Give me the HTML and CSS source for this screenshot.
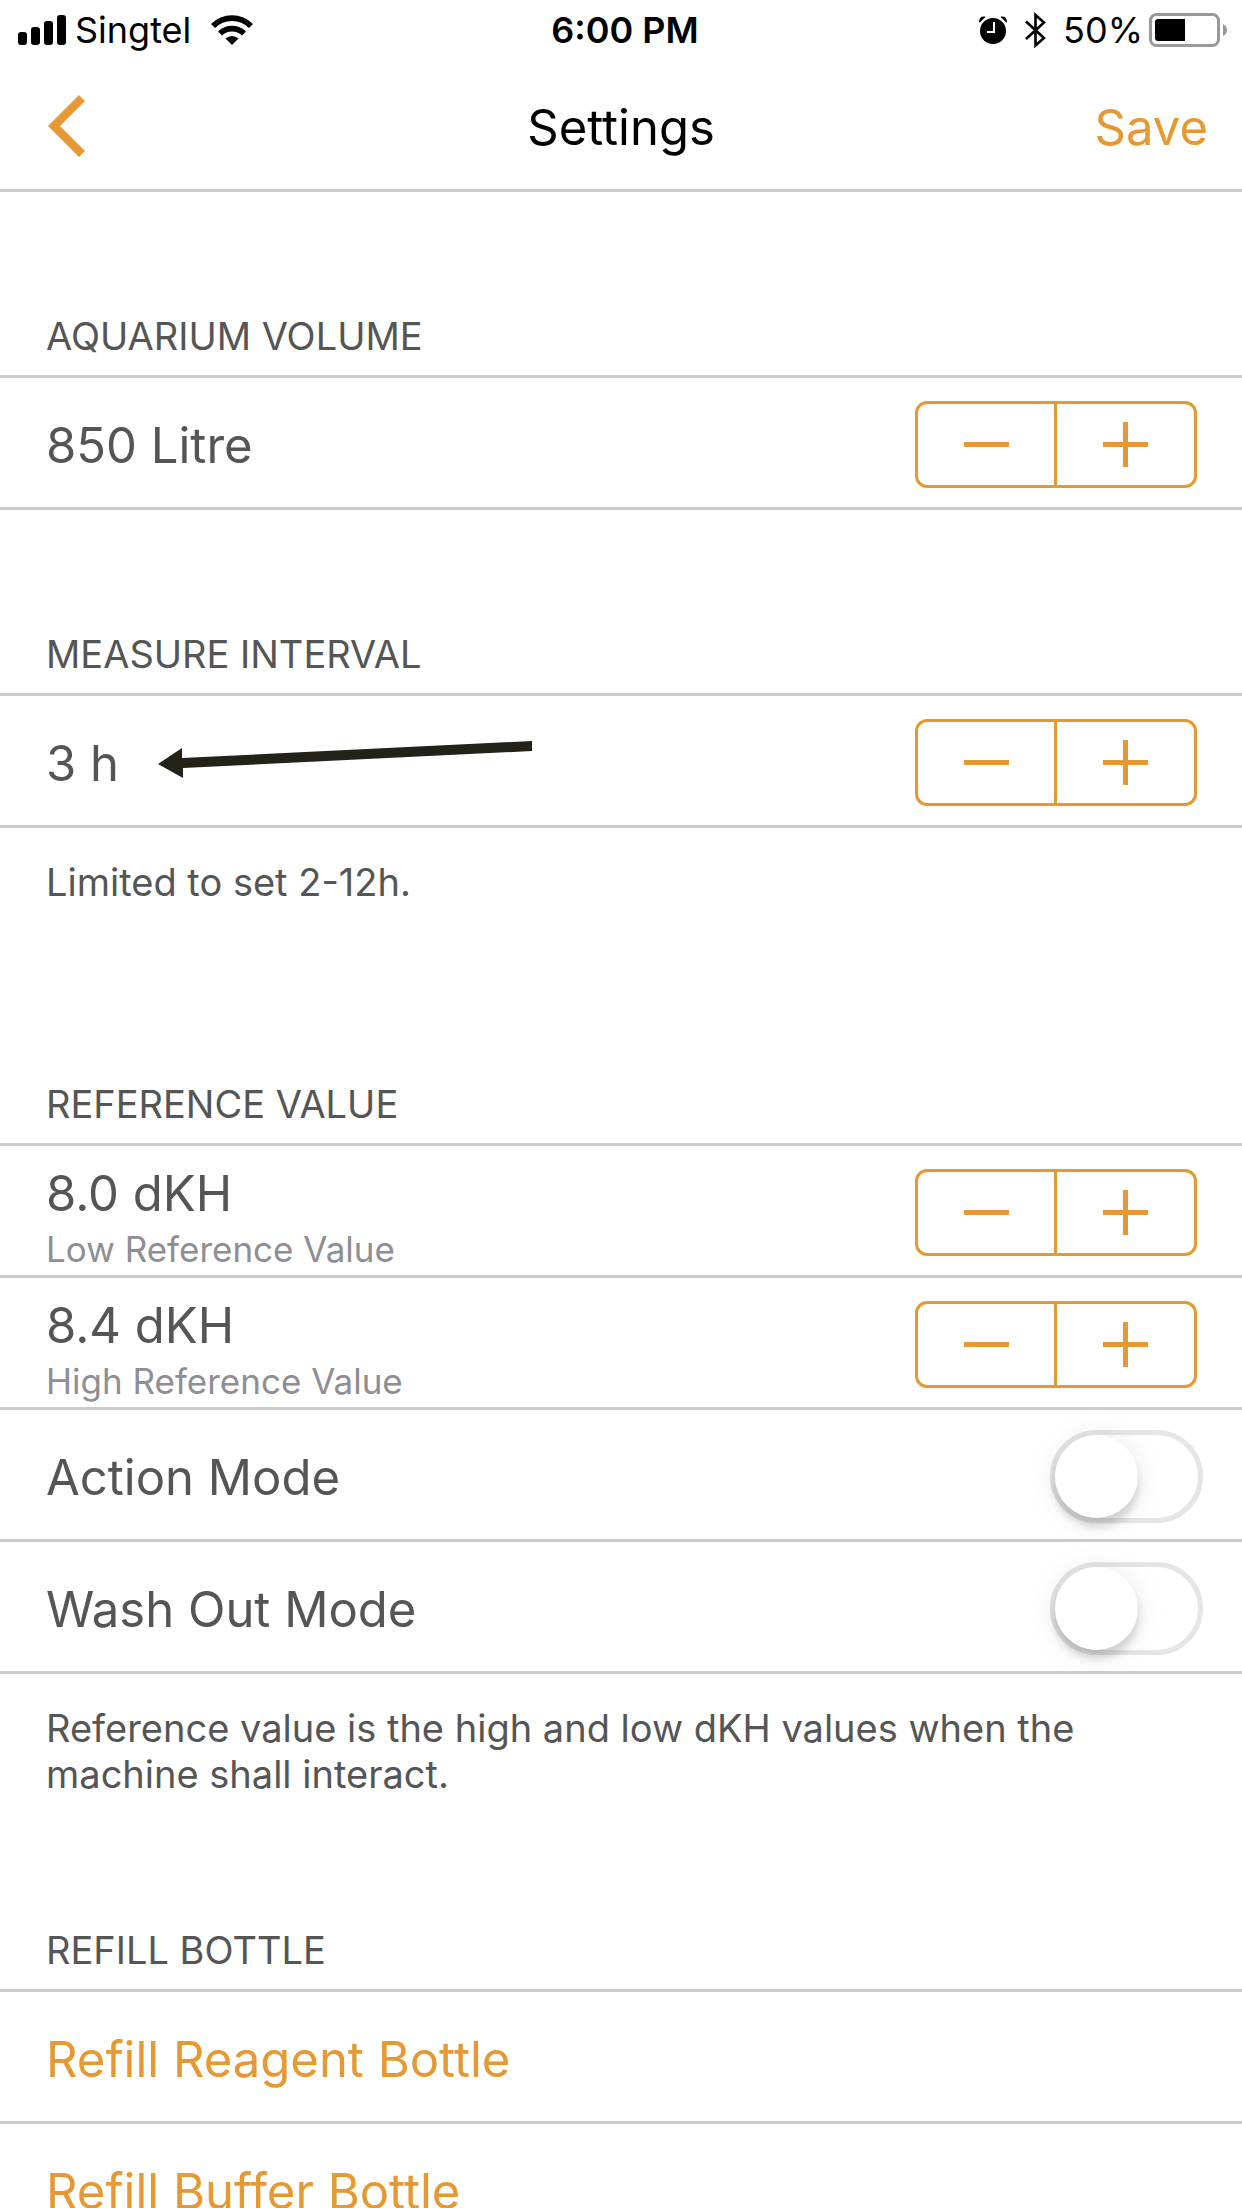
FILE: index.html
```html
<!DOCTYPE html>
<html lang="en">
<head>
<meta charset="utf-8">
<meta name="viewport" content="width=device-width, initial-scale=1">
<title>Settings</title>
<link rel="stylesheet" href="styles.css">
</head>
<body>
<div class="status">
  <div class="status-left">
    <svg class="signal" width="48" height="30" viewBox="0 0 48 30" aria-hidden="true">
      <rect x="0" y="17" width="9" height="13" rx="3"/><rect x="13" y="12" width="9" height="18" rx="3"/><rect x="26" y="6" width="9" height="24" rx="3"/><rect x="39" y="0" width="9" height="30" rx="3"/>
    </svg>
    <span class="carrier">Singtel</span>
    <svg class="wifi" width="42" height="30" viewBox="0 0 42 30" aria-hidden="true">
      <path d="M0 9A29.500 29.500 0 0 1 42 9L38 13A24 24 0 0 0 4 13Z"/>
      <path d="M7 16.500A20 20 0 0 1 35 16.500L31 20.500A14.500 14.500 0 0 0 11 20.500Z"/>
      <path d="M14.500 23.500A9.500 9.500 0 0 1 27.500 23.500L21 30Z"/>
    </svg>
  </div>
  <time class="clock">6:00 PM</time>
  <div class="status-right">
    <svg class="alarm" width="28" height="28" viewBox="0 0 28 28" aria-hidden="true">
      <circle cx="14" cy="15" r="13"/>
      <path d="M0 6C0 2 2 0 6 .5Q6.500 1 6 1.500L1 6.200Q.4 6.800 0 6ZM28 6C28 2 26 0 22 .5Q21.500 1 22 1.500L27 6.200Q27.600 6.800 28 6Z"/>
      <path d="M15 6V16H8" fill="none" stroke="#fff" stroke-width="2"/>
    </svg>
    <svg class="bluetooth" width="22" height="36" viewBox="0 0 22 36" aria-hidden="true">
      <path d="M1 9.500L19 26L10.500 33.500V3L19 10.500L1 27" fill="none" stroke="#000" stroke-width="2.600"/>
    </svg>
    <span class="percent">50%</span>
    <svg class="battery" width="78" height="34" viewBox="0 0 78 34" aria-hidden="true">
      <rect x="1.500" y="1.500" width="68" height="31" rx="6" fill="none" stroke="#999" stroke-width="3"/>
      <path d="M36 6V28H9Q6 28 6 25V9Q6 6 9 6Z"/>
      <path d="M74 11Q78 13 78 17T74 23Z" fill="#999"/>
    </svg>
  </div>
</div>
<header class="nav">
  <button class="back" type="button" aria-label="Back">
    <svg width="38" height="62" viewBox="0 0 38 62" aria-hidden="true"><path d="M34 3L6 31L34 59" fill="none" stroke="#e69832" stroke-width="8.500"/></svg>
  </button>
  <h1 class="title">Settings</h1>
  <button class="save" type="button">Save</button>
</header>
<main class="content">
  <section>
    <h2 class="heading">AQUARIUM VOLUME</h2>
    <div class="group">
      <div class="row">
        <span class="value">850 Litre</span>
        <div class="stepper" role="group" aria-label="Aquarium volume">
          <button class="step minus" type="button" aria-label="Decrease"></button>
          <button class="step plus" type="button" aria-label="Increase"></button>
        </div>
      </div>
    </div>
  </section>
  <section>
    <h2 class="heading">MEASURE INTERVAL</h2>
    <div class="group">
      <div class="row">
        <span class="value">3 h</span>
        <svg class="arrow" width="374" height="37" viewBox="0 0 374 37" aria-hidden="true"><path d="M0 23L24 7V17L374 0V10L25 27V37Z" fill="#222218"/></svg>
        <div class="stepper" role="group" aria-label="Measure interval">
          <button class="step minus" type="button" aria-label="Decrease"></button>
          <button class="step plus" type="button" aria-label="Increase"></button>
        </div>
      </div>
    </div>
    <p class="note">Limited to set 2-12h.</p>
  </section>
  <section>
    <h2 class="heading">REFERENCE VALUE</h2>
    <div class="group">
      <div class="row">
        <div class="stack">
          <span class="value">8.0 dKH</span>
          <span class="caption">Low Reference Value</span>
        </div>
        <div class="stepper" role="group" aria-label="Low reference value">
          <button class="step minus" type="button" aria-label="Decrease"></button>
          <button class="step plus" type="button" aria-label="Increase"></button>
        </div>
      </div>
      <div class="row">
        <div class="stack">
          <span class="value">8.4 dKH</span>
          <span class="caption">High Reference Value</span>
        </div>
        <div class="stepper" role="group" aria-label="High reference value">
          <button class="step minus" type="button" aria-label="Decrease"></button>
          <button class="step plus" type="button" aria-label="Increase"></button>
        </div>
      </div>
      <div class="row switch-row">
        <label class="value" for="action-mode">Action Mode</label>
        <input class="switch" id="action-mode" type="checkbox" role="switch">
      </div>
      <div class="row switch-row">
        <label class="value" for="wash-mode">Wash Out Mode</label>
        <input class="switch" id="wash-mode" type="checkbox" role="switch">
      </div>
    </div>
    <p class="note">Reference value is the high and low dKH values when the machine shall interact.</p>
  </section>
  <section>
    <h2 class="heading">REFILL BOTTLE</h2>
    <div class="group">
      <button class="row action" type="button">Refill Reagent Bottle</button>
      <button class="row action" type="button">Refill Buffer Bottle</button>
    </div>
  </section>
</main>
</body>
</html>
```
FILE: styles.css
```css
* {
  box-sizing: border-box;
}

body {
  display: flex;
  flex-direction: column;
  height: 100vh;
  margin: 0;
  background: #fff;
  color: #555;
  font-family: Inter, "Liberation Sans", sans-serif;
  font-size: 49px;
  line-height: 60px;
}

button {
  margin: 0;
  padding: 0;
  border: 0;
  background: none;
  color: #e69832;
  font: inherit;
}

svg {
  flex: none;
  display: block;
}

/* Status bar */
.status {
  flex: none;
  display: grid;
  grid-template-columns: 1fr auto 1fr;
  align-items: center;
  height: 60px;
  padding: 0 10px 0 18px;
  color: #000;
  font-size: 36px;
}

.status-left,
.status-right {
  display: flex;
  align-items: center;
}

.status-right {
  justify-content: flex-end;
  padding-right: 5px;
}

.carrier {
  margin: 0 20px 0 9px;
}

.clock {
  font-weight: 600;
}

.bluetooth {
  margin: 0 16px 0 18px;
}

.percent {
  margin-right: 6px;
}

/* Navigation bar */
.nav {
  flex: none;
  display: grid;
  grid-template-columns: 1fr auto 1fr;
  align-items: center;
  height: 132px;
  padding: 3px 34px 0;
  border-bottom: 3px solid #ccc;
}

.back {
  justify-self: start;
  margin-left: 14px;
}

.title {
  margin: 0;
  padding-top: 3px;
  color: #000;
  font-size: 49px;
  font-weight: 400;
}

.save {
  justify-self: end;
  padding-top: 3px;
}

/* Settings list */
.content {
  flex: 1;
  min-height: 0;
  overflow-y: auto;
  scrollbar-width: none;
}

.heading {
  margin: 0;
  padding: 121px 46px 16px;
  font-size: 38px;
  font-weight: 400;
  line-height: 46px;
}

.group {
  border-top: 3px solid #ccc;
}

.row {
  display: flex;
  align-items: center;
  justify-content: space-between;
  width: 100%;
  height: 132px;
  padding: 4px 45px 0 46px;
  border-bottom: 3px solid #ccc;
}

.switch-row {
  padding-right: 39px;
}

.action {
  padding-top: 6px;
  text-align: left;
}

.value {
  padding-top: 2px;
}

.stack {
  display: flex;
  flex-direction: column;
  padding-top: 10px;
}

.caption {
  color: #8e8e93;
  font-size: 35px;
  line-height: 50px;
}

.arrow {
  margin: 0 auto 6px 39px;
}

.note {
  min-height: 132px;
  margin: 0;
  padding: 31px 46px 9px;
  font-size: 38px;
  line-height: 46px;
}

/* Stepper */
.stepper {
  flex: none;
  display: flex;
  width: 282px;
  height: 87px;
  border: 3px solid #e69832;
  border-radius: 12px;
}

.step {
  flex: 1;
  background: linear-gradient(#e69832, #e69832) center / 45px 5px no-repeat;
}

.minus {
  flex: 0 0 139px;
  border-right: 3px solid #e69832;
}

.plus {
  background:
    linear-gradient(#e69832, #e69832) center / 45px 5px no-repeat,
    linear-gradient(#e69832, #e69832) center / 5px 45px no-repeat;
}

/* Switch */
.switch {
  flex: none;
  appearance: none;
  width: 153px;
  height: 93px;
  margin: 0;
  border: 5px solid #e5e5e5;
  border-radius: 47px;
}

.switch::before {
  content: "";
  display: block;
  width: 83px;
  height: 83px;
  border-radius: 50%;
  background: #fff;
  box-shadow: 0 9px 9px rgba(0, 0, 0, 0.14), 0 3px 30px rgba(0, 0, 0, 0.1);
}

.switch:checked {
  background: #e69832;
  border-color: #e69832;
}

.switch:checked::before {
  margin-left: 60px;
}
```
